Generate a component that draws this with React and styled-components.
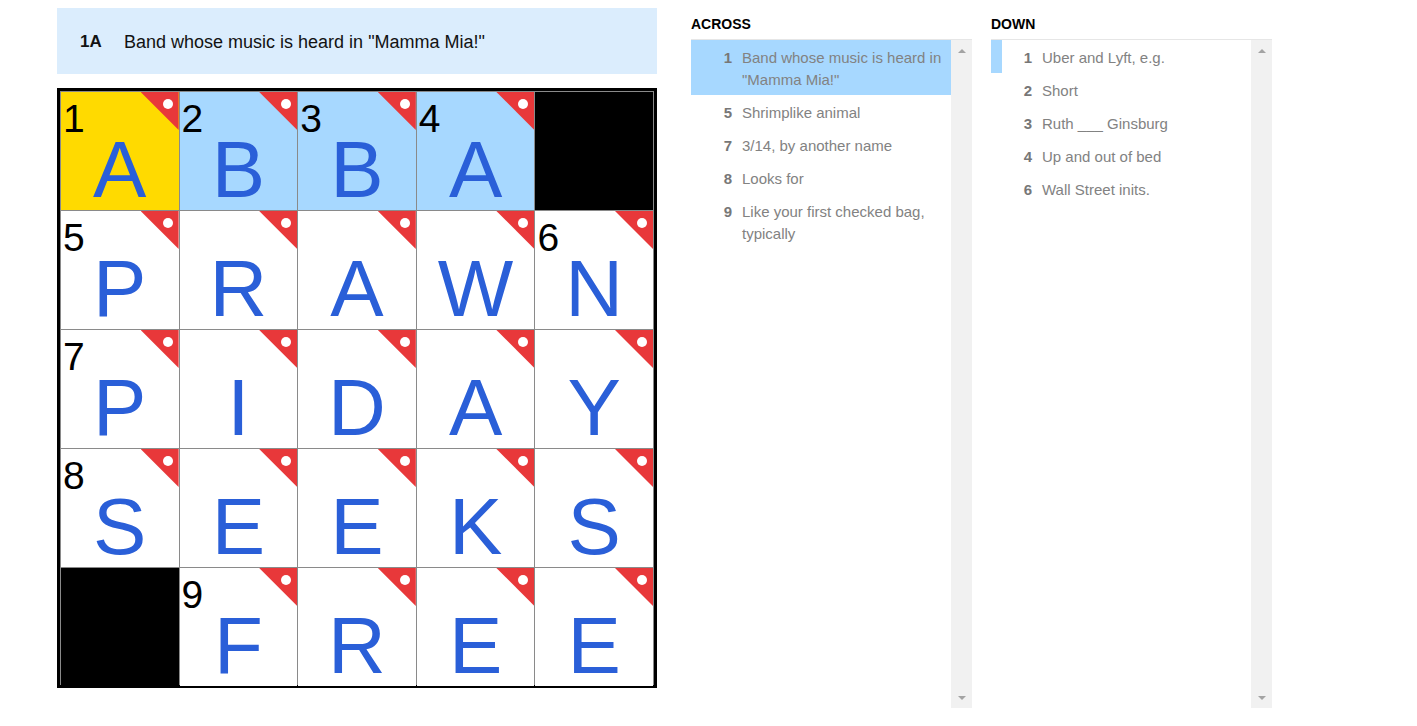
import styled, { createGlobalStyle } from "styled-components";

const GlobalStyle = createGlobalStyle`
  html, body {
    margin: 0;
    padding: 0;
    background: #fff;
  }
  body {
    font-family: "Liberation Sans", Arial, sans-serif;
  }
`;

const GRID = [
  ["A", "B", "B", "A", null],
  ["P", "R", "A", "W", "N"],
  ["P", "I", "D", "A", "Y"],
  ["S", "E", "E", "K", "S"],
  [null, "F", "R", "E", "E"],
];

const NUMBERS = {
  "0-0": 1, "0-1": 2, "0-2": 3, "0-3": 4,
  "1-0": 5, "1-4": 6, "2-0": 7, "3-0": 8, "4-1": 9,
};

const ACROSS = [
  { n: 1, text: 'Band whose music is heard in "Mamma Mia!"', active: true },
  { n: 5, text: "Shrimplike animal" },
  { n: 7, text: "3/14, by another name" },
  { n: 8, text: "Looks for" },
  { n: 9, text: "Like your first checked bag, typically" },
];

const DOWN = [
  { n: 1, text: "Uber and Lyft, e.g.", cross: true },
  { n: 2, text: "Short" },
  { n: 3, text: "Ruth ___ Ginsburg" },
  { n: 4, text: "Up and out of bed" },
  { n: 6, text: "Wall Street inits." },
];

const Page = styled.div`
  display: flex;
  align-items: flex-start;
  padding: 8px 0 0 57px;
  gap: 34px;
`;

const Board = styled.div`
  width: 600px;
  display: flex;
  flex-direction: column;
  gap: 14px;
`;

const ClueBar = styled.div`
  height: 66px;
  box-sizing: border-box;
  padding: 2px 0 0 23px;
  background: #dbedfd;
  display: flex;
  align-items: center;
  font-size: 18px;
  color: #121212;
`;

const ClueLabel = styled.span`
  font-weight: 700;
  width: 44px;
  font-size: 17px;
`;

const Grid = styled.div`
  width: 600px;
  height: 600px;
  box-sizing: border-box;
  border: 3px solid #000;
  background: #8a8a8a;
  padding: 1px;
  display: grid;
  grid-template-columns: repeat(5, 1fr);
  grid-template-rows: repeat(5, 1fr);
  gap: 1px;
`;

const cellBg = { selected: "#ffda00", word: "#a7d8ff", block: "#000", plain: "#fff" };

const Cell = styled.div`
  position: relative;
  background: ${(p) => cellBg[p.$kind]};
  display: flex;
  justify-content: center;
  align-items: flex-start;
`;

const Letter = styled.span`
  margin-top: 38px;
  font-size: 80px;
  line-height: 80px;
  color: #2a5fd8;
`;

const Num = styled.span`
  position: absolute;
  top: 7px;
  left: 2px;
  font-size: 39px;
  line-height: 1;
  color: #000;
`;

const Flag = styled.span`
  position: absolute;
  top: 0;
  right: 0;
  width: 38px;
  height: 38px;
  background: #e8383a;
  clip-path: polygon(0 0, 100% 0, 100% 100%);

  &::after {
    content: "";
    position: absolute;
    top: 7px;
    right: 6px;
    width: 10px;
    height: 10px;
    border-radius: 50%;
    background: #fff;
  }
`;

const Lists = styled.div`
  display: flex;
  gap: 19px;
`;

const Column = styled.div`
  width: 281px;
  flex: 0 0 281px;
  display: flex;
  flex-direction: column;
`;

const Heading = styled.h3`
  margin: 8px 0 7px;
  font-size: 14px;
  line-height: 16px;
  font-weight: 700;
  text-transform: uppercase;
  color: #000;
`;

const ListBox = styled.div`
  height: 668px;
  border-top: 1px solid #e6e6e6;
  display: flex;
`;

const List = styled.ul`
  flex: 1;
  margin: 0;
  padding: 0;
  list-style: none;
`;

const Item = styled.li`
  display: flex;
  padding: 7px 6px 4px 20px;
  font-size: 15px;
  line-height: 22px;
  color: #828282;
  background: ${(p) => (p.$active ? "#a7d8ff" : "transparent")};
  box-shadow: ${(p) => (p.$cross ? "inset 11px 0 0 #a7d8ff" : "none")};
`;

const ItemNum = styled.span`
  flex: 0 0 21px;
  text-align: right;
  margin-right: 10px;
  font-weight: 700;
  color: #777;
`;

const Scrollbar = styled.div`
  width: 21px;
  flex: 0 0 21px;
  background: #f1f1f1;
  display: flex;
  flex-direction: column;
  justify-content: space-between;
  align-items: center;
  padding: 9px 0 8px;
  box-sizing: border-box;
`;

const Arrow = styled.span`
  width: 0;
  height: 0;
  border-left: 4px solid transparent;
  border-right: 4px solid transparent;
  ${(p) => (p.$down ? "border-top: 4px solid #a3a3a3;" : "border-bottom: 4px solid #a3a3a3;")}
`;

function ClueList({ title, clues }) {
  return (
    <Column>
      <Heading>{title}</Heading>
      <ListBox>
        <List>
          {clues.map((c) => (
            <Item key={c.n} $active={c.active} $cross={c.cross}>
              <ItemNum>{c.n}</ItemNum>
              <span>{c.text}</span>
            </Item>
          ))}
        </List>
        <Scrollbar>
          <Arrow />
          <Arrow $down />
        </Scrollbar>
      </ListBox>
    </Column>
  );
}

export default function App() {
  return (
    <>
      <GlobalStyle />
      <Page>
        <Board>
          <ClueBar>
            <ClueLabel>1A</ClueLabel>
            <span>Band whose music is heard in "Mamma Mia!"</span>
          </ClueBar>
          <Grid>
            {GRID.map((row, r) =>
              row.map((ch, c) => {
                const key = `${r}-${c}`;
                if (ch === null) return <Cell key={key} $kind="block" />;
                const kind = r === 0 ? (c === 0 ? "selected" : "word") : "plain";
                return (
                  <Cell key={key} $kind={kind}>
                    {NUMBERS[key] && <Num>{NUMBERS[key]}</Num>}
                    <Flag />
                    <Letter>{ch}</Letter>
                  </Cell>
                );
              })
            )}
          </Grid>
        </Board>
        <Lists>
          <ClueList title="Across" clues={ACROSS} />
          <ClueList title="Down" clues={DOWN} />
        </Lists>
      </Page>
    </>
  );
}
